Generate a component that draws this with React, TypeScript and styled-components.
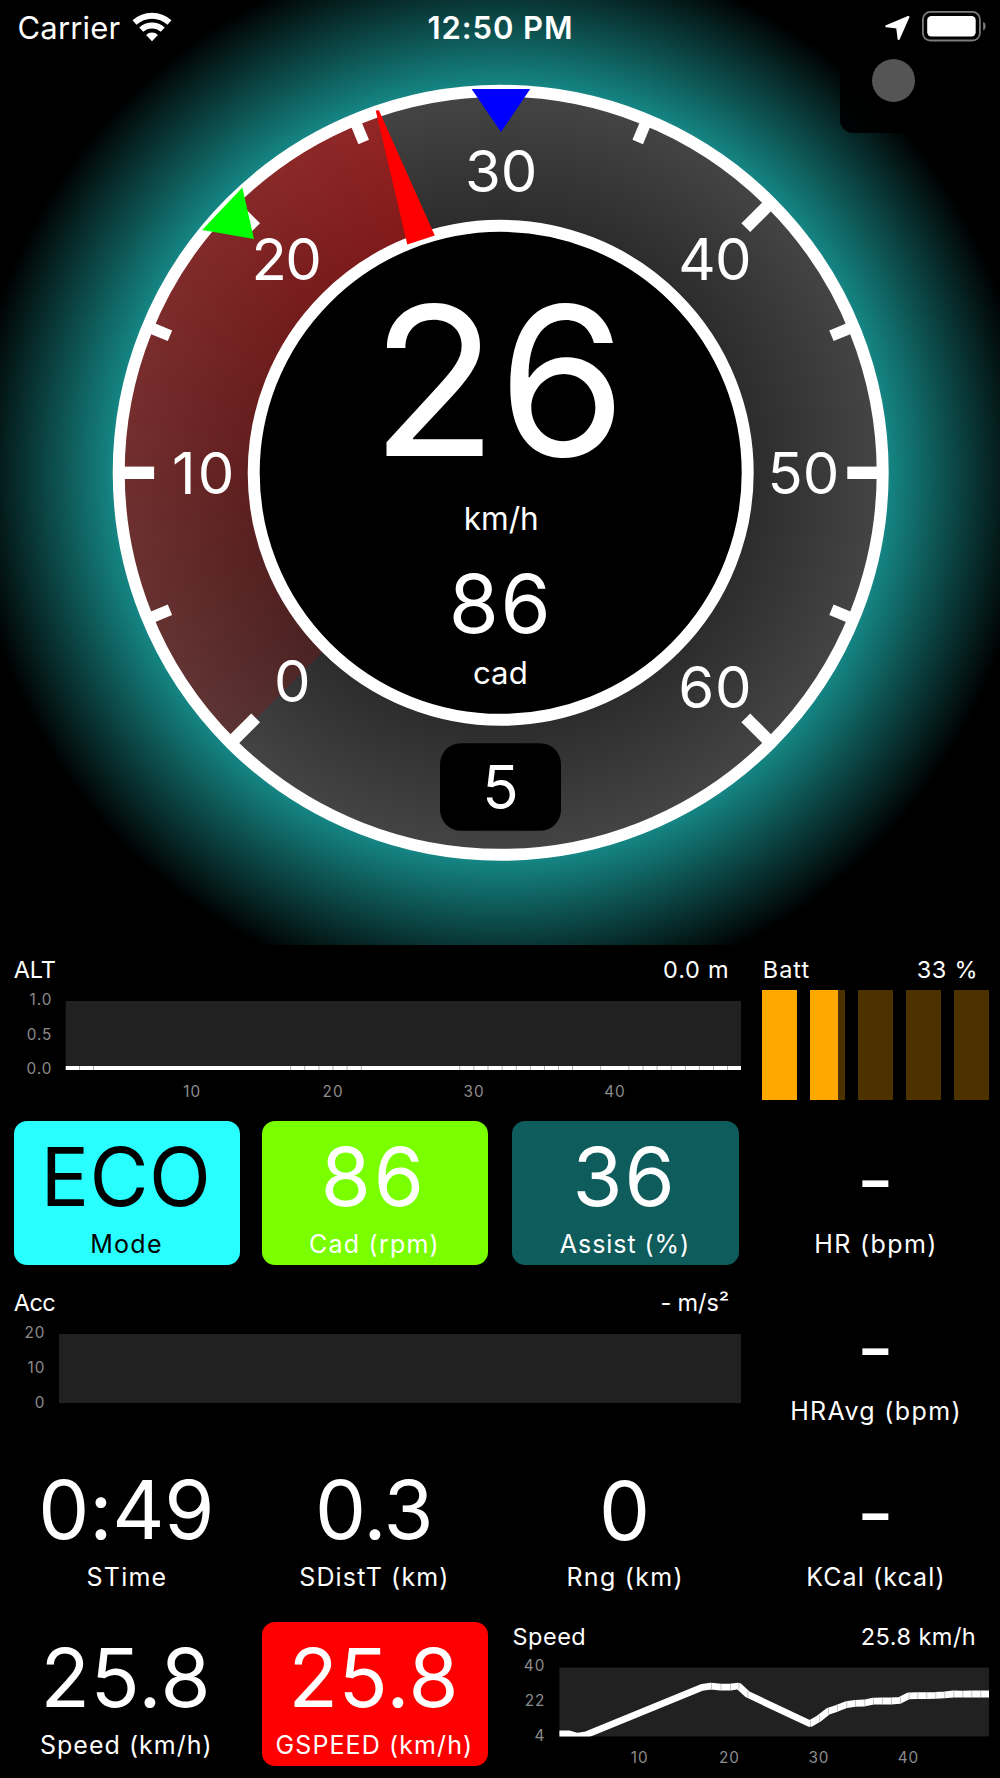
import React from "react";
import styled, { createGlobalStyle } from "styled-components";

const GlobalStyle = createGlobalStyle`
  body {
    margin: 0;
    background: #000;
    color: #fff;
    font-family: Inter, "Liberation Sans", sans-serif;
    -webkit-font-smoothing: antialiased;
  }
`;

/* ---------- layout ---------- */

const Screen = styled.main`
  width: 1000px;
  height: 1778px;
  overflow: hidden;
  background: #000;
`;

const GaugeSection = styled.section`
  position: relative;
  height: 945px;
  background: radial-gradient(circle at 500.7px 472.8px, #158583 388px, #000 530px);
`;

const Dial = styled.div`
  position: absolute;
  left: 118.7px;
  top: 90.8px;
  width: 764px;
  height: 764px;
  border-radius: 50%;
  background:
    conic-gradient(
      from 225deg,
      rgba(170, 0, 0, 0.23) 0deg,
      rgba(245, 0, 0, 0.44) 116.1deg,
      transparent 116.1deg
    ),
    radial-gradient(circle, #2c2c2c 250px, #444 378px);
`;

const DialFace = styled.svg`
  position: absolute;
  left: 0;
  top: 0;
`;

const MenuCorner = styled.div`
  position: absolute;
  left: 840px;
  top: 27px;
  width: 106px;
  height: 106px;
  border-radius: 13px;
  display: flex;
  align-items: center;
  justify-content: center;
  background: rgba(0, 0, 0, 0.9);
`;

const MenuDot = styled.div`
  width: 43px;
  height: 43px;
  border-radius: 50%;
  background: #555;
`;

const StatusBar = styled.header`
  position: relative;
  display: grid;
  grid-template-columns: 1fr auto 1fr;
  height: 54px;
  padding: 0 14.5px 0 17.5px;
  font-size: 31px;
  line-height: 56.4px;
`;

const StatusGroup = styled.div<{ $end?: boolean }>`
  display: flex;
  justify-content: ${(p) => (p.$end ? "flex-end" : "flex-start")};
  gap: ${(p) => (p.$end ? "10.5px" : "11.5px")};
  letter-spacing: 0.18px;
`;

const Clock = styled.div`
  font-weight: 600;
  letter-spacing: 0.9px;
  margin-left: -2px;
`;

const Grid = styled.section`
  display: grid;
  grid-template-columns: 248px 250.7px 250.3px 226.7px;
  grid-template-rows: repeat(5, 167px);
  padding: 9px 0 0 13.5px;
`;

/* ---------- tiles ---------- */

const Tile = styled.div<{ $bg?: string; $fg?: string; $shift?: number; $raise?: number }>`
  box-sizing: border-box;
  width: 226.7px;
  height: 143.7px;
  margin-top: ${(p) => -(p.$raise ?? 0)}px;
  padding-right: ${(p) => p.$shift ?? 0}px;
  border-radius: 13px;
  background: ${(p) => p.$bg ?? "transparent"};
  color: ${(p) => p.$fg ?? "#fff"};
  text-align: center;
  white-space: nowrap;
`;

const Value = styled.div<{ $ls?: number; $drop?: number }>`
  height: 111px;
  font-size: 81px;
  line-height: ${(p) => 112 + 2 * (p.$drop ?? 0)}px;
  letter-spacing: ${(p) => p.$ls ?? 0}px;
`;

const Label = styled.div<{ $ls: number }>`
  font-size: 25px;
  line-height: 24px;
  letter-spacing: ${(p) => p.$ls}px;
  text-indent: ${(p) => p.$ls}px;
`;

/* ---------- chart panels ---------- */

const Panel = styled.div<{ $wide?: number }>`
  grid-column: span ${(p) => p.$wide ?? 1};
  display: flex;
  flex-direction: column;
`;

const PanelHead = styled.div<{ $inset?: number; $line?: number }>`
  display: flex;
  justify-content: space-between;
  height: 32px;
  padding: 0 ${(p) => p.$inset ?? 11}px 0 0.3px;
  font-size: 23.5px;
  line-height: ${(p) => p.$line ?? 31}px;
  white-space: pre;
`;

const HeadText = styled.span<{ $ls: number }>`
  letter-spacing: ${(p) => p.$ls}px;
`;

const Plot = styled.svg`
  display: block;
  overflow: visible;
`;

const AxisText = styled.text`
  font-size: 15.3px;
  letter-spacing: 1px;
  fill: #8c8c8c;
`;

const Bars = styled.div`
  display: flex;
  justify-content: space-between;
  height: 109.5px;
  margin-top: 4px;
`;

const Bar = styled.div`
  width: 34.8px;
  background: #4d3200;
`;

const BarFill = styled.div`
  height: 100%;
  background: #ffa800;
`;

/* ---------- gauge ---------- */

const CX = 500.7;
const CY = 472.8;

const DialText = styled.text<{ $size: number; $ls?: number }>`
  fill: #fff;
  font-size: ${(p) => p.$size}px;
  letter-spacing: ${(p) => p.$ls ?? 0}px;
`;

const scale = [
  { t: "0", x: 274, y: 702, ls: 0 },
  { t: "10", x: 172, y: 493.6, ls: 2.2 },
  { t: "20", x: 251.6, y: 280, ls: -1.6 },
  { t: "30", x: 465, y: 191.5, ls: 0 },
  { t: "40", x: 678.2, y: 280, ls: -0.6 },
  { t: "50", x: 767.4, y: 493.6, ls: 0 },
  { t: "60", x: 678.3, y: 707.5, ls: 0.8 },
];

function Gauge() {
  return (
    <DialFace width="1000" height="945" viewBox="0 0 1000 945">
      <circle cx={CX} cy={CY} r="382" fill="none" stroke="#fff" strokeWidth="12" />
      <circle cx={CX} cy={CY} r="247" fill="#000" stroke="#fff" strokeWidth="12" />
      {Array.from({ length: 13 }, (_, i) => {
        const major = i % 2 === 0;
        const length = i === 6 ? 31 : major ? 35.4 : 24;
        return (
          <rect
            key={i}
            x={major ? -6.2 : -5.7}
            y="-382"
            width={major ? 12.4 : 11.4}
            height={length}
            fill="#fff"
            transform={`translate(${CX} ${CY}) rotate(${-135 + i * 22.5})`}
          />
        );
      })}
      {scale.map((s) => (
        <DialText key={s.t} $size={58} $ls={s.ls} x={s.x} y={s.y}>
          {s.t}
        </DialText>
      ))}
      <polygon points="471.6,89 530.2,89 501,132" fill="#00f" />
      <polygon points="242.3,187.6 202.2,230 254,239" fill="#0f0" />
      <polygon points="375.7,110.5 378.9,110.2 434.8,235.4 407.3,244.4" fill="#f00" />
      <DialText $size={207} $ls={0.76} x="371" y="455.6">26</DialText>
      <DialText $size={31.6} x="463.7" y="530">km/h</DialText>
      <DialText $size={81} $ls={1.6} x="448.7" y="632.5">86</DialText>
      <DialText $size={31.2} x="473" y="683.7">cad</DialText>
      <rect x="440" y="743.2" width="121" height="87.6" rx="21" fill="#000" />
      <DialText $size={60} x="482.3" y="809">5</DialText>
    </DialFace>
  );
}

/* ---------- status icons ---------- */

function WifiIcon() {
  const c = 20;
  const b = 29;
  const arc = (r: number) => {
    const dx = r * Math.sin(0.75);
    const dy = r * Math.cos(0.75);
    return `M${c - dx} ${b - dy}A${r} ${r} 0 0 1 ${c + dx} ${b - dy}`;
  };
  return (
    <svg width="40" height="54" viewBox="0 -12.3 40 54" fill="none" stroke="#fff">
      <path d={arc(25.6)} strokeWidth="6" />
      <path d={arc(15.8)} strokeWidth="5.8" />
      <path d={`${arc(8.7)}L${c} ${b}Z`} fill="#fff" stroke="none" />
    </svg>
  );
}

function LocationIcon() {
  return (
    <svg width="26" height="54" viewBox="884.5 0 26 54">
      <path
        d="M908.8 17L886.9 26.2L897.8 27.5L899.2 38.9Z"
        fill="#fff"
        stroke="#fff"
        strokeWidth="2.2"
        strokeLinejoin="round"
      />
    </svg>
  );
}

function BatteryIcon() {
  return (
    <svg width="65" height="54" viewBox="920.3 0 65 54">
      <rect x="922.2" y="11.9" width="57" height="28.6" rx="7.5" fill="none" stroke="#7c7c7c" strokeWidth="1.8" />
      <rect x="926.5" y="16" width="48.5" height="20.4" rx="4.2" fill="#fff" />
      <path d="M982.4 21.4Q985 23 985 26.1Q985 29.2 982.4 30.8Z" fill="#7c7c7c" />
    </svg>
  );
}

/* ---------- charts ---------- */

const altSeams = [2, 3, 17, 18, 19, 20, 21, 22, 29, 30, 31, 32, 33, 34, 35, 36, 37, 39, 41, 42, 43, 44, 45, 46, 47, 48];

function AltitudePlot() {
  return (
    <Plot width="727" height="126" viewBox="14 986 727 126">
      <rect x="65.7" y="1001" width="675.3" height="69" fill="#212121" />
      <rect x="65.7" y="1066" width="675.3" height="4" fill="#fff" />
      {altSeams.map((n) => (
        <rect key={n} x={50.8 + n * 14.09} y="1066" width="0.8" height="4" fill="#999" />
      ))}
      {["1.0", "0.5", "0.0"].map((t, i) => (
        <AxisText key={t} x="52.4" y={1005.4 + i * 34.5} textAnchor="end">{t}</AxisText>
      ))}
      {[10, 20, 30, 40].map((n, i) => (
        <AxisText key={n} x={192.2 + i * 140.9} y="1097" textAnchor="middle">{n}</AxisText>
      ))}
    </Plot>
  );
}

function AccelerationPlot() {
  return (
    <Plot width="727" height="126" viewBox="14 1320 727 126">
      <rect x="59" y="1334" width="682" height="69" fill="#212121" />
      {["20", "10", "0"].map((t, i) => (
        <AxisText key={t} x="45.4" y={1338.4 + i * 34.7} textAnchor="end">{t}</AxisText>
      ))}
    </Plot>
  );
}

const speedTrace: [number, number][] = [
  [559, 1734], [568.5, 1733.8], [577, 1736.3], [586, 1734.8], [702, 1687.4], [711, 1686.2],
  [720.7, 1687.2], [730, 1687.2], [738.6, 1686], [747.5, 1694.3], [810, 1723.8], [819, 1718.5],
  [828.3, 1711.2], [837.3, 1708.2], [846.5, 1704.6], [855.3, 1703.4], [864.5, 1703], [873.3, 1701.2],
  [882, 1701], [891, 1701], [900, 1700.3], [908.7, 1695.8], [917.5, 1695.6], [926.5, 1695.6],
  [935.5, 1695.4], [944.5, 1694.8], [953.5, 1694], [962.5, 1694.2], [971.5, 1694], [980.5, 1694], [989, 1694],
];

function SpeedPlot() {
  return (
    <Plot width="477" height="124" viewBox="512 1654 477 124">
      <clipPath id="speed-area">
        <rect x="559.4" y="1667.6" width="429.6" height="68.8" />
      </clipPath>
      <rect x="559.4" y="1667.6" width="429.6" height="68.8" fill="#212121" />
      <g clipPath="url(#speed-area)">
        <polyline
          points={speedTrace.map((p) => p.join(",")).join(" ")}
          fill="none"
          stroke="#fff"
          strokeWidth="6.8"
          strokeLinejoin="bevel"
        />
        {speedTrace.slice(5, -1).map(([x, y]) => (
          <rect key={x} x={x} y={y - 3.2} width="0.7" height="6.4" fill="#777" opacity="0.6" />
        ))}
      </g>
      {["40", "22", "4"].map((t, i) => (
        <AxisText key={t} x="545.4" y={1671.4 + i * 34.7} textAnchor="end">{t}</AxisText>
      ))}
      {[10, 20, 30, 40].map((n, i) => (
        <AxisText key={n} x={639.8 + i * 89.57} y="1763.2" textAnchor="middle">{n}</AxisText>
      ))}
    </Plot>
  );
}

function BatteryBars({ percent }: { percent: number }) {
  return (
    <Bars>
      {[0, 1, 2, 3, 4].map((i) => {
        const start = i * 48.1;
        const lit = Math.max(0, Math.min(34.8, (percent / 100) * 227 - start));
        return (
          <Bar key={i}>
            <BarFill style={{ width: lit }} />
          </Bar>
        );
      })}
    </Bars>
  );
}

interface MetricProps {
  value: string;
  label: string;
  valueLs?: number;
  labelLs: number;
  bg?: string;
  fg?: string;
  shift?: number;
  drop?: number;
  raise?: number;
}

function Metric({ value, label, valueLs, labelLs, bg, fg, shift, drop, raise }: MetricProps) {
  return (
    <Tile $bg={bg} $fg={fg} $shift={shift} $raise={raise}>
      <Value $ls={valueLs} $drop={drop}>{value}</Value>
      <Label $ls={labelLs}>{label}</Label>
    </Tile>
  );
}

export default function App() {
  return (
    <Screen>
      <GlobalStyle />
      <GaugeSection>
        <Dial />
        <Gauge />
        <MenuCorner>
          <MenuDot />
        </MenuCorner>
        <StatusBar>
          <StatusGroup>
            <span>Carrier</span>
            <WifiIcon />
          </StatusGroup>
          <Clock>12:50 PM</Clock>
          <StatusGroup $end>
            <LocationIcon />
            <BatteryIcon />
          </StatusGroup>
        </StatusBar>
      </GaugeSection>
      <Grid>
        <Panel $wide={3}>
          <PanelHead $inset={33}>
            <HeadText $ls={-0.2}>ALT</HeadText>
            <HeadText $ls={0.79}>0.0 m</HeadText>
          </PanelHead>
          <AltitudePlot />
        </Panel>
        <Panel>
          <PanelHead>
            <HeadText $ls={1}>Batt</HeadText>
            <HeadText $ls={0.7}>33 %</HeadText>
          </PanelHead>
          <BatteryBars percent={33.2} />
        </Panel>

        <Metric value="ECO" label="Mode" valueLs={0.22} labelLs={1.27} bg="#29ffff" fg="#000" shift={2} />
        <Metric value="86" label="Cad (rpm)" valueLs={3} labelLs={1.24} bg="#7aff00" shift={2} />
        <Metric value="36" label="Assist (%)" valueLs={2} labelLs={0.95} bg="#0f5c5c" shift={2} />
        <Metric value="-" label="HR (bpm)" labelLs={1.4} shift={1} drop={3} />

        <Panel $wide={3}>
          <PanelHead $inset={33.5} $line={30}>
            <HeadText $ls={-0.6}>Acc</HeadText>
            <HeadText $ls={-0.12}>- m/s²</HeadText>
          </PanelHead>
          <AccelerationPlot />
        </Panel>
        <Metric value="-" label="HRAvg (bpm)" labelLs={1.35} shift={1} drop={4} />

        <Metric value="0:49" label="STime" valueLs={-0.25} labelLs={1.22} shift={1} raise={1} />
        <Metric value="0.3" label="SDistT (km)" valueLs={-0.9} labelLs={1.15} shift={2} raise={1} />
        <Metric value="0" label="Rng (km)" labelLs={1.3} shift={2} drop={1} raise={1} />
        <Metric value="-" label="KCal (kcal)" labelLs={1.1} shift={1} drop={3.5} raise={1} />

        <Metric value="25.8" label="Speed (km/h)" valueLs={0.67} labelLs={1.03} shift={2} />
        <Metric value="25.8" label="GSPEED (km/h)" valueLs={0.67} labelLs={1.1} bg="#f00" shift={2} />
        <Panel $wide={2}>
          <PanelHead $inset={13} $line={29.5}>
            <HeadText $ls={0.5}>Speed</HeadText>
            <HeadText $ls={0.46}>25.8 km/h</HeadText>
          </PanelHead>
          <SpeedPlot />
        </Panel>
      </Grid>
    </Screen>
  );
}
